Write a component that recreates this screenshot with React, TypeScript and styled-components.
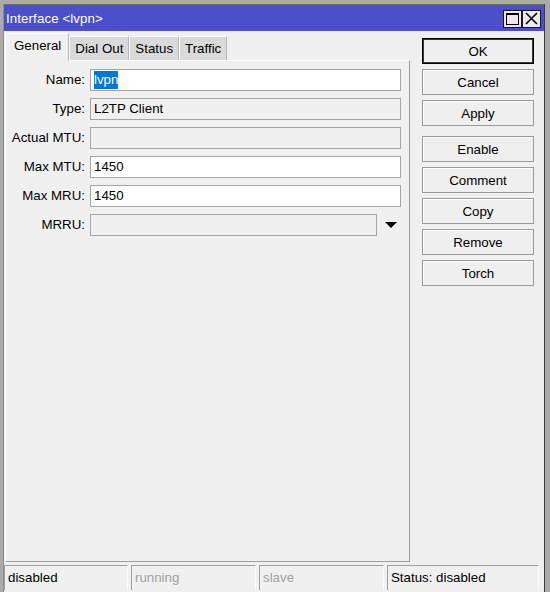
import { FC, Fragment } from "react"
import styled, { createGlobalStyle } from "styled-components"

const GlobalStyle = createGlobalStyle`
  html, body {
    margin: 0;
    padding: 0;
    background: #ababab;
    overflow: hidden;
  }
  body {
    font-family: "Liberation Sans", Arial, sans-serif;
    font-size: 13.3px;
    color: #000;
  }
`

const Screen = styled.div`
  padding: 4px 5px 0 3px;
  height: 588px;
`

const Window = styled.div`
  display: flex;
  flex-direction: column;
  height: 100%;
  background: #f0f0f0;
  border-left: 1px solid #8c8c8c;
  border-right: 1px solid #3c3c3c;
  border-top: 1px solid #6d6d6d;
  box-sizing: border-box;
`

const TitleBar = styled.div`
  display: flex;
  align-items: center;
  height: 26px;
  background: #4b4fc9;
  color: #fff;
  padding-left: 2px;
  padding-right: 3px;
`

const Title = styled.div`
  flex: 1;
  letter-spacing: 0.1px;
`

const TitleButton = styled.div`
  width: 17px;
  height: 16px;
  border: 1px solid #1a1a1a;
  background: #ece9ec;
  display: flex;
  align-items: center;
  justify-content: center;
  margin-top: 1px;
`

const Main = styled.div`
  display: flex;
  flex: 1;
  padding: 1px 0 0 1px;
  min-height: 0;
`

const Left = styled.div`
  display: flex;
  flex-direction: column;
  width: 405px;
`

const Tabs = styled.div`
  display: flex;
  align-items: flex-end;
  height: 28px;
`

const Tab = styled.div<{ active?: boolean }>`
  box-sizing: border-box;
  height: ${({ active }) => (active ? "28px" : "24px")};
  padding: ${({ active }) => (active ? "4px 7px 0 8px" : "4px 5px 0 5px")};
  background: ${({ active }) => (active ? "#f0f0f0" : "#dadada")};
  border-top: 1px solid #fdfdfd;
  border-left: 1px solid #fdfdfd;
  border-right: 1px solid #b8b8b8;
  margin-bottom: ${({ active }) => (active ? "-1px" : "0")};
  position: relative;
  z-index: ${({ active }) => (active ? 1 : 0)};
`

const Panel = styled.div`
  flex: 1;
  box-sizing: border-box;
  border-top: 1px solid #fdfdfd;
  border-left: 1px solid #fdfdfd;
  border-right: 1px solid #a0a0a0;
  border-bottom: 1px solid #a0a0a0;
  padding: 8px 0 0 0;
  display: grid;
  grid-template-columns: 79px 311px auto;
  grid-auto-rows: 22px;
  column-gap: 5px;
  row-gap: 7px;
  align-content: start;
`

const Label = styled.div`
  text-align: right;
  line-height: 22px;
`

const Field = styled.div<{ editable?: boolean; short?: boolean }>`
  box-sizing: border-box;
  height: 22px;
  width: ${({ short }) => (short ? "287px" : "311px")};
  border: 1px solid #a5a5a5;
  background: ${({ editable }) => (editable ? "#fff" : "#f0f0f0")};
  padding-left: 3px;
  line-height: 20px;
  display: flex;
  align-items: center;
`

const FieldCell = styled.div`
  display: flex;
  align-items: center;
  grid-column: 2 / span 2;
`

const Selected = styled.span`
  background: #0078d7;
  color: #fff;
  line-height: 18px;
`

const Arrow = styled.div`
  width: 0;
  height: 0;
  margin-left: 8px;
  border-left: 6px solid transparent;
  border-right: 6px solid transparent;
  border-top: 6px solid #000;
`

const Buttons = styled.div`
  display: flex;
  flex-direction: column;
  margin-left: 12px;
  padding-top: 6px;
  width: 112px;
`

const Button = styled.div<{ primary?: boolean; spaced?: boolean }>`
  box-sizing: border-box;
  height: 26px;
  margin-bottom: 5px;
  margin-top: ${({ spaced }) => (spaced ? "5px" : "0")};
  border: 1px solid ${({ primary }) => (primary ? "#000" : "#9a9a9a")};
  box-shadow: ${({ primary }) => (primary ? "inset 0 0 0 1px #3a3a3a" : "inset 1px 1px 0 #fff")};
  background: #efefef;
  display: flex;
  align-items: center;
  justify-content: center;
`

const StatusBar = styled.div`
  display: flex;
  gap: 3px;
  padding: 3px 0 2px 0;
`

const StatusCell = styled.div<{ width: number; dim?: boolean }>`
  box-sizing: border-box;
  width: ${({ width }) => width}px;
  height: 25px;
  border-top: 1px solid #a0a0a0;
  border-left: 1px solid #a0a0a0;
  border-right: 1px solid #fdfdfd;
  padding-left: 3px;
  line-height: 24px;
  color: ${({ dim }) => (dim ? "#a0a0a0" : "#000")};
`

const fields: { label: string; value?: string; editable?: boolean; selected?: boolean; combo?: boolean }[] = [
  { label: "Name:", value: "lvpn", editable: true, selected: true },
  { label: "Type:", value: "L2TP Client" },
  { label: "Actual MTU:" },
  { label: "Max MTU:", value: "1450", editable: true },
  { label: "Max MRU:", value: "1450", editable: true },
  { label: "MRRU:", combo: true },
]

const actions = ["Enable", "Comment", "Copy", "Remove", "Torch"]

const App: FC = () => (
  <>
    <GlobalStyle />
    <Screen>
      <Window>
        <TitleBar>
          <Title>Interface &lt;lvpn&gt;</Title>
          <TitleButton>
            <svg width="13" height="12" viewBox="0 0 13 12">
              <rect x="0.5" y="0.5" width="12" height="11" fill="none" stroke="#000" />
              <line x1="0" y1="1.5" x2="13" y2="1.5" stroke="#000" />
            </svg>
          </TitleButton>
          <TitleButton>
            <svg width="13" height="13" viewBox="0 0 13 13">
              <path d="M1 1 L12 12 M12 1 L1 12" stroke="#000" strokeWidth="1.6" />
            </svg>
          </TitleButton>
        </TitleBar>
        <Main>
          <Left>
            <Tabs>
              <Tab active>General</Tab>
              <Tab>Dial Out</Tab>
              <Tab>Status</Tab>
              <Tab>Traffic</Tab>
            </Tabs>
            <Panel>
              {fields.map((f) => (
                <Fragment key={f.label}>
                  <Label>{f.label}</Label>
                  <FieldCell>
                    <Field editable={f.editable} short={f.combo}>
                      {f.selected ? <Selected>{f.value}</Selected> : f.value}
                    </Field>
                    {f.combo && <Arrow />}
                  </FieldCell>
                </Fragment>
              ))}
            </Panel>
          </Left>
          <Buttons>
            <Button primary>OK</Button>
            <Button>Cancel</Button>
            <Button>Apply</Button>
            {actions.map((a, i) => (
              <Button key={a} spaced={i === 0}>
                {a}
              </Button>
            ))}
          </Buttons>
        </Main>
        <StatusBar>
          <StatusCell width={124}>disabled</StatusCell>
          <StatusCell width={125} dim>
            running
          </StatusCell>
          <StatusCell width={125} dim>
            slave
          </StatusCell>
          <StatusCell width={152}>Status: disabled</StatusCell>
        </StatusBar>
      </Window>
    </Screen>
  </>
)

export default App
